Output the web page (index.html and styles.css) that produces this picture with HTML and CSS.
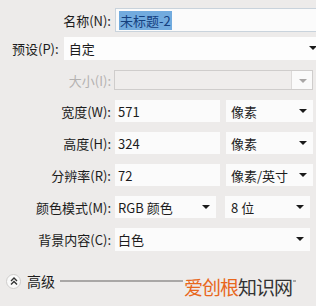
FILE: index.html
```html
<!DOCTYPE html>
<html lang="zh">

<head>
    <meta charset="UTF-8">
    <meta name="viewport" content="width=device-width, initial-scale=1.0">
    <title>新建</title>
    <link rel="stylesheet" href="styles.css">
</head>

<body>
    <div class="dialog">
        <div class="row row-name">
            <label class="label">名称(N):</label>
            <div class="field name-field"><span class="selected">未标题-2</span></div>
        </div>

        <div class="row row-preset">
            <label class="label preset-label">预设(P):</label>
            <div class="field select preset-select">自定<span class="arrow"></span></div>
        </div>

        <div class="row row-size">
            <label class="label disabled">大小(I):</label>
            <div class="field size-select"><span class="size-drop"><span class="arrow gray"></span></span></div>
        </div>

        <div class="row">
            <label class="label">宽度(W):</label>
            <div class="field num">571</div>
            <div class="field select unit">像素<span class="arrow"></span></div>
        </div>

        <div class="row">
            <label class="label">高度(H):</label>
            <div class="field num">324</div>
            <div class="field select unit">像素<span class="arrow"></span></div>
        </div>

        <div class="row">
            <label class="label">分辨率(R):</label>
            <div class="field num">72</div>
            <div class="field select unit">像素/英寸<span class="arrow"></span></div>
        </div>

        <div class="row">
            <label class="label">颜色模式(M):</label>
            <div class="field select mode">RGB 颜色<span class="arrow"></span></div>
            <div class="field select bits">8 位<span class="arrow"></span></div>
        </div>

        <div class="row">
            <label class="label">背景内容(C):</label>
            <div class="field select bg">白色<span class="arrow"></span></div>
        </div>

        <div class="advanced">
            <span class="adv-icon">
                <svg width="10" height="10" viewBox="0 0 10 10">
                    <path d="M2 5 L5 2 L8 5 M2 8.5 L5 5.5 L8 8.5" fill="none" stroke="#333" stroke-width="1.4" />
                </svg>
            </span>
            <span class="adv-text">高级</span>
            <span class="adv-line"></span>
        </div>
    </div>

    <div class="watermark"><span class="wm-orange">爱创根</span>知识网</div>
</body>

</html>
```

FILE: styles.css
```css
body {
    margin: 0;
    width: 316px;
    height: 306px;
    overflow: hidden;
    background-color: #edebea;
    font-family: "Noto Sans CJK SC", "Noto Sans", sans-serif;
    font-size: 13px;
    color: #1c1c1c;
    position: relative;
}

.dialog {
    padding-top: 8px;
    display: flex;
    flex-direction: column;
    gap: 10px;
}

.row {
    display: flex;
    align-items: center;
    height: 22px;
}

.label {
    width: 111px;
    flex: none;
    text-align: right;
    white-space: nowrap;
}

.label.disabled {
    color: #b4b2b1;
}

.field {
    box-sizing: border-box;
    height: 22px;
    margin-left: 4px;
    background-color: #fbfbfb;
    border: 1px solid #d6d4d3;
    display: flex;
    align-items: center;
    padding-left: 3px;
    position: relative;
    flex: none;
    white-space: nowrap;
}

.row-name {
    height: 24px;
}

.name-field {
    height: 24px;
    width: 201px;
    border-right: none;
    border-color: #c9d3dc;
}

.selected {
    background-color: #72abde;
    color: #14407e;
    padding: 1px 1px;
    line-height: 17px;
}

.row-preset {
    height: 23px;
    margin-top: -5px;
}

.preset-label {
    width: auto;
    text-align: left;
    padding-left: 12px;
}

.preset-select {
    height: 23px;
    flex: 1;
    margin-left: 5px;
    border: none;
    padding-left: 5px;
    background-color: #fdfdfd;
}

.preset-select .arrow {
    right: -1px;
}

.row-size {
    height: 20px;
}

.size-select {
    height: 20px;
    width: 199px;
    margin-left: 3px;
    background-color: #efedec;
    border-color: #cfcdcc;
}

.size-drop {
    position: absolute;
    right: 0;
    top: 0;
    bottom: 0;
    width: 20px;
    background-color: #fafafa;
    border-left: 1px solid #dcdad9;
}

.arrow {
    position: absolute;
    right: 6px;
    top: 9px;
    width: 0;
    height: 0;
    border-left: 4px solid transparent;
    border-right: 4px solid transparent;
    border-top: 4px solid #1a1a1a;
}

.arrow.gray {
    border-top-color: #a8a6a5;
    right: 5px;
    top: 8px;
}

.num {
    width: 105px;
    border: none;
}

.unit {
    width: 87px;
    margin-left: 6px;
    border: none;
    padding-left: 5px;
}

.mode {
    width: 101px;
    border: none;
}

.bits {
    width: 85px;
    margin-left: 9px;
    border: none;
    padding-left: 6px;
}

.bg {
    width: 195px;
    height: 23px;
    border: none;
}

.advanced {
    display: flex;
    align-items: center;
    height: 20px;
    margin-top: 11px;
    padding-left: 6px;
}

.adv-icon {
    box-sizing: border-box;
    width: 15px;
    height: 15px;
    border-radius: 50%;
    background-color: #fafafa;
    border: 1px solid #cfcdcc;
    display: flex;
    align-items: center;
    justify-content: center;
}

.adv-text {
    margin-left: 6px;
    font-size: 14px;
}

.adv-line {
    width: 236px;
    height: 2px;
    margin-left: 5px;
    background-color: #a9a7a6;
}

.watermark {
    position: absolute;
    left: 183px;
    top: 274px;
    padding: 0 1px;
    background-color: #edebea;
    font-size: 19px;
    line-height: 26px;
    color: #333;
    letter-spacing: -1px;
}

.wm-orange {
    color: #e8671c;
}
```
